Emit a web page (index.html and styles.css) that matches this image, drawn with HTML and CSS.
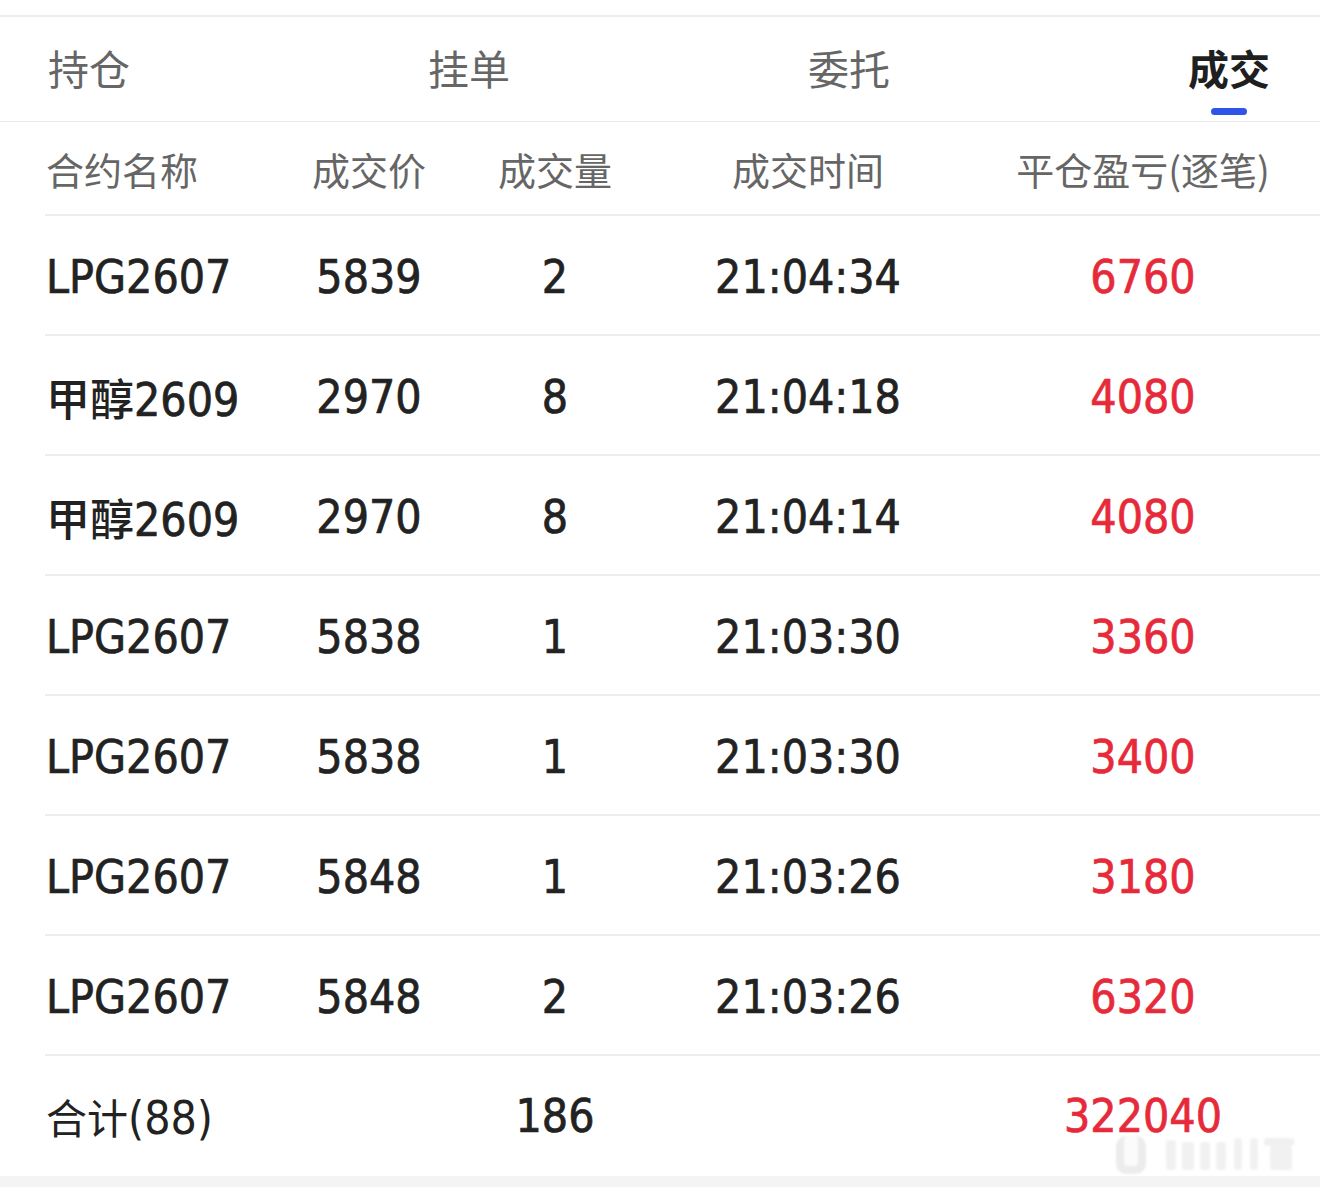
FILE: index.html
```html
<!DOCTYPE html>
<html lang="zh-CN">
<head>
<meta charset="utf-8">
<title>成交</title>
<link rel="stylesheet" href="styles.css">
</head>
<body>
<div class="page">
  <div class="topgap"></div>
  <nav class="tabs">
    <div class="tab">持仓</div>
    <div class="tab">挂单</div>
    <div class="tab">委托</div>
    <div class="tab active">成交<span class="bar"></span></div>
  </nav>
  <div class="table">
    <div class="row head">
      <div class="c1">合约名称</div>
      <div class="c2">成交价</div>
      <div class="c3">成交量</div>
      <div class="c4">成交时间</div>
      <div class="c5">平仓盈亏(逐笔)</div>
    </div>
    <div class="row">
      <div class="c1">LPG2607</div><div class="c2">5839</div><div class="c3">2</div><div class="c4">21:04:34</div><div class="c5 red">6760</div>
    </div>
    <div class="row">
      <div class="c1"><span class="cjk">甲醇</span>2609</div><div class="c2">2970</div><div class="c3">8</div><div class="c4">21:04:18</div><div class="c5 red">4080</div>
    </div>
    <div class="row">
      <div class="c1"><span class="cjk">甲醇</span>2609</div><div class="c2">2970</div><div class="c3">8</div><div class="c4">21:04:14</div><div class="c5 red">4080</div>
    </div>
    <div class="row">
      <div class="c1">LPG2607</div><div class="c2">5838</div><div class="c3">1</div><div class="c4">21:03:30</div><div class="c5 red">3360</div>
    </div>
    <div class="row">
      <div class="c1">LPG2607</div><div class="c2">5838</div><div class="c3">1</div><div class="c4">21:03:30</div><div class="c5 red">3400</div>
    </div>
    <div class="row">
      <div class="c1">LPG2607</div><div class="c2">5848</div><div class="c3">1</div><div class="c4">21:03:26</div><div class="c5 red">3180</div>
    </div>
    <div class="row">
      <div class="c1">LPG2607</div><div class="c2">5848</div><div class="c3">2</div><div class="c4">21:03:26</div><div class="c5 red">6320</div>
    </div>
    <div class="row total">
      <div class="c1 sum"><span class="cjk light">合计</span>(88)</div><div class="c2"></div><div class="c3">186</div><div class="c4"></div><div class="c5 red">322040</div>
    </div>
  </div>
  <div class="footer"></div>
  <svg class="watermark" width="200" height="44" viewBox="0 0 200 44" aria-hidden="true">
    <rect x="6" y="2" width="30" height="38" rx="10" fill="#ececec"/>
    <rect x="14" y="2" width="14" height="30" rx="4" fill="#fbfbfb"/>
    <rect x="56" y="6" width="10" height="30" rx="3" fill="#f1f1f1"/>
    <rect x="72" y="8" width="12" height="28" rx="3" fill="#f1f1f1"/>
    <rect x="90" y="8" width="10" height="28" rx="3" fill="#f1f1f1"/>
    <rect x="106" y="8" width="10" height="28" rx="3" fill="#f1f1f1"/>
    <rect x="124" y="4" width="8" height="32" rx="3" fill="#f1f1f1"/>
    <rect x="140" y="4" width="8" height="32" rx="3" fill="#f1f1f1"/>
    <rect x="154" y="4" width="30" height="8" rx="3" fill="#f0f0f0"/>
    <rect x="160" y="12" width="22" height="24" rx="3" fill="#f1f1f1"/>
  </svg>
</div>
</body>
</html>
```
FILE: styles.css
```css
html, body {
  margin: 0;
  padding: 0;
  background: #ffffff;
}
body {
  font-family: "Noto Sans CJK SC", "Noto Sans", sans-serif;
  color: #222222;
}
.page {
  position: relative;
  width: 1320px;
  min-height: 1187px;
  background: #ffffff;
}
.topgap {
  height: 15px;
  border-bottom: 2px solid #ececec;
}
.tabs {
  display: flex;
  justify-content: space-between;
  padding: 0 50px 0 48px;
  height: 104px;
  border-bottom: 1px solid #e9e9e9;
}
.tab {
  display: flex;
  flex-direction: column;
  align-items: center;
  padding-top: 25px;
  font-size: 41px;
  line-height: 50px;
  color: #666666;
}
.tab.active {
  color: #1f1f1f;
  font-weight: 700;
}
.bar {
  margin-top: 16px;
  width: 36px;
  height: 7px;
  border-radius: 4px;
  background: #2f55e8;
}
.table {
  margin-left: 45px;
}
.row {
  display: grid;
  grid-template-columns: 225px 198px 174px 332px 338px;
  align-items: center;
  box-sizing: border-box;
  height: 120px;
  padding-top: 4px;
  border-bottom: 2px solid #ededed;
  font-family: "DejaVu Sans Condensed", "Roboto", "Noto Sans CJK SC", sans-serif;
  font-size: 46px;
  color: #222222;
  -webkit-text-stroke: 0.7px currentColor;
}
.row > div {
  text-align: center;
  white-space: nowrap;
}
.row > .c1 {
  text-align: left;
  padding-left: 1px;
}
.cjk {
  font-family: "Noto Sans CJK SC", sans-serif;
  font-size: 44px;
  font-weight: 500;
  -webkit-text-stroke: 0;
}
.cjk.light {
  font-size: 41px;
  font-weight: 400;
}
.sum {
  -webkit-text-stroke: 0;
}
.row.head {
  height: 94px;
  padding-top: 0;
  font-family: "Noto Sans CJK SC", sans-serif;
  font-size: 38px;
  color: #666666;
  -webkit-text-stroke: 0;
}
.row.total {
  height: 120px;
  padding-top: 0;
  border-bottom: none;
}
.red {
  color: #e72a3a;
}
.footer {
  height: 14px;
  background: #f4f4f4;
}
.watermark {
  position: absolute;
  right: 10px;
  top: 1134px;
  filter: blur(1px);
}
```
